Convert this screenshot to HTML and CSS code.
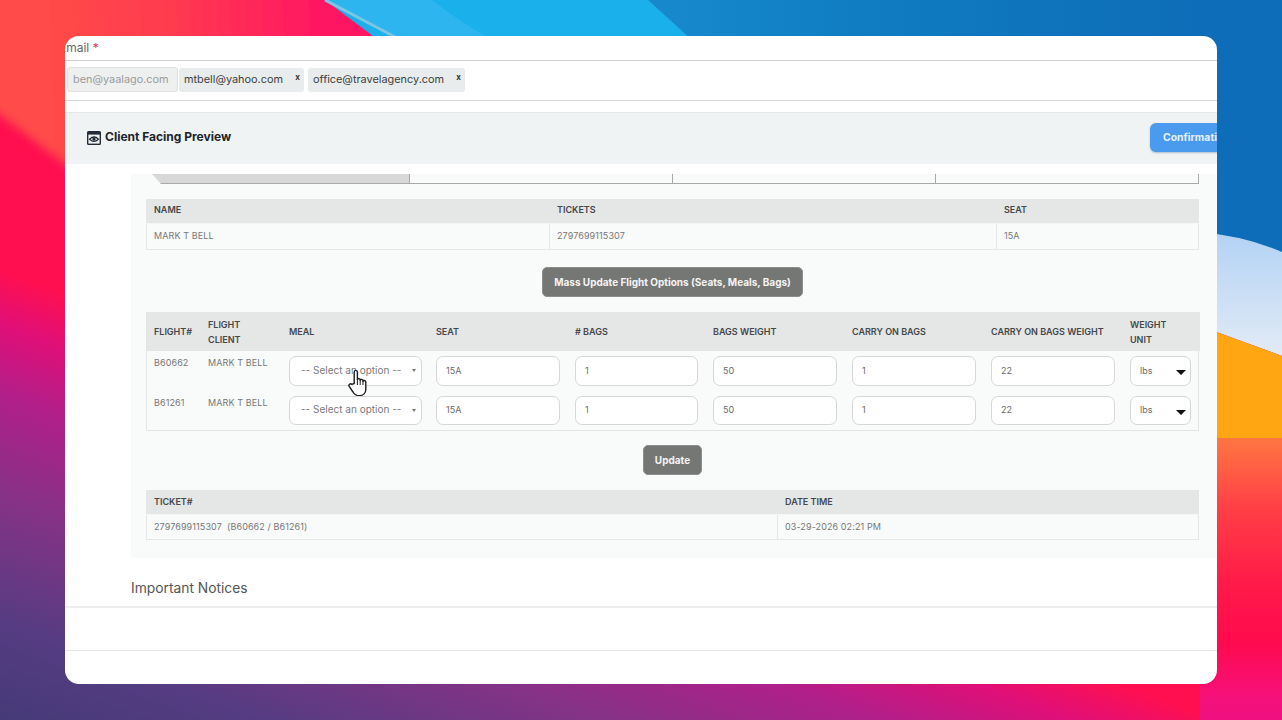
FILE: index.html
```html
<!DOCTYPE html>
<html lang="en">
<head>
<meta charset="utf-8">
<title>Client Facing Preview</title>
<link rel="stylesheet" href="styles.css">
</head>
<body>
<svg class="wallpaper" viewBox="0 0 1282 720" width="1282" height="720" aria-hidden="true">
  <defs>
    <linearGradient id="baseGrad" gradientUnits="userSpaceOnUse" x1="0" y1="720" x2="146" y2="324">
      <stop offset="0" stop-color="#453a78"/>
      <stop offset=".22" stop-color="#563c82"/>
      <stop offset=".5" stop-color="#863286"/>
      <stop offset=".72" stop-color="#b01f8a"/>
      <stop offset=".88" stop-color="#e00f78"/>
      <stop offset="1" stop-color="#ff0f50"/>
    </linearGradient>
    <linearGradient id="redGrad" gradientUnits="userSpaceOnUse" x1="40" y1="40" x2="340" y2="30">
      <stop offset="0" stop-color="#ff4c48"/>
      <stop offset=".45" stop-color="#ff3a50"/>
      <stop offset="1" stop-color="#ff1264"/>
    </linearGradient>
    <linearGradient id="blueGrad" gradientUnits="userSpaceOnUse" x1="680" y1="0" x2="1200" y2="0">
      <stop offset="0" stop-color="#1688cb"/>
      <stop offset=".4" stop-color="#0f7bc1"/>
      <stop offset="1" stop-color="#0e6db8"/>
    </linearGradient>
    <linearGradient id="skyGrad" x1="0" y1="0" x2="0" y2="1">
      <stop offset="0" stop-color="#b2d2f5"/>
      <stop offset="1" stop-color="#e2ebf5"/>
    </linearGradient>
    <linearGradient id="sunsetGrad" gradientUnits="userSpaceOnUse" x1="0" y1="438" x2="0" y2="720">
      <stop offset="0" stop-color="#ff7642"/>
      <stop offset=".25" stop-color="#ff3f46"/>
      <stop offset=".5" stop-color="#ff1c48"/>
      <stop offset=".72" stop-color="#ff0a4e"/>
      <stop offset=".92" stop-color="#f5107a"/>
      <stop offset="1" stop-color="#f01080"/>
    </linearGradient>
    <filter id="soft" x="-10%" y="-10%" width="120%" height="120%">
      <feGaussianBlur stdDeviation="5"/>
    </filter>
  </defs>
  <rect width="1282" height="720" fill="url(#baseGrad)"/>
  <path d="M-30 -30H400V60L70 168 -30 92Z" fill="url(#redGrad)" filter="url(#soft)"/>
  <path d="M325 0H760V60H405Z" fill="#1ab0ec"/>
  <path d="M325 0H432Q460 22 492 40H403Z" fill="#2cb5ee"/>
  <path d="M325 0L397 38" stroke="#7cc6e4" stroke-width="3" fill="none"/>
  <path d="M648 0H1282V260H692V40Q670 20 648 0Z" fill="url(#blueGrad)"/>
  <path d="M1200 232Q1245 236 1282 252V356L1200 326Z" fill="url(#skyGrad)"/>
  <path d="M1200 326L1282 356V440L1200 438Z" fill="#ffa612"/>
  <rect x="1200" y="438" width="82" height="282" fill="url(#sunsetGrad)"/>
</svg>

<main class="card">
  <div class="email-label"><span class="email-text">Email</span> <span class="req">*</span></div>
  <div class="tag-row">
    <span class="tag tag-locked">ben@yaalago.com</span>
    <span class="tag tag-second">mtbell@yahoo.com<b class="tag-x">x</b></span>
    <span class="tag tag-third">office@travelagency.com<b class="tag-x">x</b></span>
  </div>

  <header class="preview-head">
    <h1 class="preview-title">
      <svg class="eye-icon" viewBox="0 0 14 14" width="14" height="14" aria-hidden="true">
        <path d="M1.5 0H12.5A1.5 1.5 0 0 1 14 1.5V12.5A1.5 1.5 0 0 1 12.5 14H1.5A1.5 1.5 0 0 1 0 12.5V1.5A1.5 1.5 0 0 1 1.5 0Z" fill="#252b36"/>
        <rect x="1.4" y="3.6" width="11.2" height="9" fill="#eef2f3"/>
        <path d="M2.6 8.2Q7 3.8 11.4 8.2 7 12.4 2.6 8.2Z" fill="none" stroke="#252b36" stroke-width="1.2"/>
        <circle cx="7" cy="8.1" r="1.6" fill="#252b36"/>
      </svg>
      Client Facing Preview
    </h1>
    <button class="btn-confirm" type="button">Confirmation</button>
  </header>

  <section class="panel">
    <div class="tabs">
      <div class="tab tab-active"></div>
      <div class="tab"></div>
      <div class="tab"></div>
      <div class="tab"></div>
    </div>

    <div class="table-simple cols-name">
      <div class="th">NAME</div><div class="th">TICKETS</div><div class="th">SEAT</div>
      <div class="td">MARK T BELL</div><div class="td">2797699115307</div><div class="td td-last">15A</div>
    </div>

    <div class="btn-line btn-line-mass"><button class="btn-gray btn-mass" type="button">Mass Update Flight Options (Seats, Meals, Bags)</button></div>

    <div class="table-flights">
      <div class="fh">FLIGHT#</div><div class="fh fh-wrap">FLIGHT CLIENT</div><div class="fh">MEAL</div><div class="fh">SEAT</div><div class="fh"># BAGS</div><div class="fh">BAGS WEIGHT</div><div class="fh">CARRY ON BAGS</div><div class="fh">CARRY ON BAGS WEIGHT</div><div class="fh fh-wrap">WEIGHT UNIT</div>

      <div class="fc fc-text">B60662</div><div class="fc fc-text">MARK T BELL</div>
      <div class="fc fc-pointer">
        <div class="field field-select">-- Select an option --</div>
        <svg class="hand" viewBox="0 0 20 28" width="20" height="28" aria-hidden="true">
          <path d="M6.2 14.5V3.2C6.2 .8 9.4 .8 9.4 3.2V10.5C9.4 9.3 12.2 9.3 12.2 10.7V11.2C12.2 10 15 10 15 11.5V12.2C15 11 17.8 11.2 17.8 12.8V20C17.8 24 15.4 26.8 11.4 26.8 8 26.8 6.4 25.4 5 23L1.2 17.4C.2 15.6 2.4 14 3.8 15.4Z" fill="#fff" stroke="#1c1c1c" stroke-width="1.4" stroke-linejoin="round"/>
          <path d="M9.4 10.5V16M12.2 11V16M15 12V16" stroke="#1c1c1c" stroke-width="1" fill="none"/>
        </svg>
      </div>
      <div class="fc"><div class="field">15A</div></div><div class="fc"><div class="field">1</div></div><div class="fc"><div class="field">50</div></div><div class="fc"><div class="field">1</div></div><div class="fc"><div class="field">22</div></div><div class="fc fc-unit"><div class="field field-unit">lbs</div></div>

      <div class="fc fc-text">B61261</div><div class="fc fc-text">MARK T BELL</div>
      <div class="fc"><div class="field field-short field-select">-- Select an option --</div></div>
      <div class="fc"><div class="field field-short">15A</div></div><div class="fc"><div class="field field-short">1</div></div><div class="fc"><div class="field field-short">50</div></div><div class="fc"><div class="field field-short">1</div></div><div class="fc"><div class="field field-short">22</div></div><div class="fc fc-unit"><div class="field field-short field-unit">lbs</div></div>
    </div>

    <div class="btn-line btn-line-update"><button class="btn-gray btn-update" type="button">Update</button></div>

    <div class="table-simple cols-ticket">
      <div class="th">TICKET#</div><div class="th">DATE TIME</div>
      <div class="td">2797699115307 &nbsp;(B60662 / B61261)</div><div class="td td-last">03-29-2026 02:21 PM</div>
    </div>
  </section>

  <h2 class="notices">Important Notices</h2>
  <div class="empty-row"></div>
</main>
</body>
</html>
```

FILE: styles.css
```css
* { box-sizing: border-box; }

html, body { margin: 0; height: 720px; overflow: hidden; }

body {
  position: relative;
  padding: 36px 0 0 65px;
  font-family: Inter, "Liberation Sans", sans-serif;
  background: #453a78;
}

.wallpaper { position: absolute; left: 0; top: 0; display: block; }

.card {
  position: relative;
  display: flex;
  flex-direction: column;
  width: 1152px;
  height: 648px;
  overflow: hidden;
  background: #fff;
  border-radius: 14px;
}

.email-label {
  flex: none;
  height: 25px;
  padding-top: 5px;
  border-bottom: 1px solid #cfcfcf;
  font-size: 12px;
  line-height: 14px;
  color: #666;
  white-space: nowrap;
}
.email-text { margin-left: -6px; }
.req { color: #e03a3a; }

.tag-row {
  flex: none;
  display: flex;
  align-items: center;
  height: 40px;
  padding: 0 0 2px 2px;
  border-bottom: 1px solid #d4d4d4;
}

.tag {
  position: relative;
  display: flex;
  align-items: center;
  height: 24px;
  padding-bottom: 2px;
  font-size: 10.9px;
  color: #3b3f42;
  background: #e9eced;
  border-radius: 3px;
  white-space: nowrap;
}
.tag-locked {
  width: 111px;
  height: 25px;
  padding-left: 5px;
  color: #9a9c9c;
  background: #eeefef;
  border: 1px solid #e0e0e0;
}
.tag-second { width: 125px; margin-left: 1px; padding-left: 5px; }
.tag-third { width: 157px; margin-left: 4px; padding-left: 5px; }
.tag-x {
  position: absolute;
  top: 4px;
  right: 4px;
  font-size: 8px;
  line-height: 10px;
  font-weight: 700;
  color: #333;
}

.preview-head {
  flex: none;
  align-self: flex-start;
  display: flex;
  align-items: center;
  justify-content: space-between;
  width: 1195px;
  height: 52px;
  margin-top: 11px;
  padding: 0 0 3px 22px;
  background: #eff3f4;
  border-top: 1px solid #e4e8e9;
}
.preview-title {
  display: flex;
  align-items: center;
  gap: 4px;
  margin: 0 0 2px;
  font-size: 12px;
  font-weight: 700;
  color: #20242c;
}
.eye-icon { margin-top: 4px; }
.btn-confirm {
  flex: none;
  width: 110px;
  height: 29px;
  padding: 0 0 0 13px;
  text-align: left;
  font: 700 10.4px Inter, "Liberation Sans", sans-serif;
  color: #e4f0fd;
  background: #4a9aee;
  border: 0;
  border-radius: 6px;
  box-shadow: 0 1px 2px rgba(60, 90, 130, .35);
}

.panel {
  flex: none;
  width: 1086px;
  height: 384px;
  margin: 10px 0 0 66px;
  padding: 0 18px 0 15px;
  background: #f9fbfb;
}

.tabs {
  display: grid;
  grid-template-columns: 264px 263px 263px 263px;
  height: 10px;
  margin-bottom: 15px;
}
.tab {
  border-right: 1px solid #a9a9a9;
  border-bottom: 1px solid #a9a9a9;
}
.tab-active {
  background: #d8d8d8;
  clip-path: polygon(6px 0, 100% 0, 100% 100%, 15px 100%);
}

.table-simple {
  display: grid;
  font-size: 9px;
  line-height: 12px;
}
.cols-name { grid-template-columns: 403px 447px 203px; }
.cols-ticket { grid-template-columns: 631px 422px; }

.th {
  height: 25px;
  padding: 6px 8px 0;
  font-weight: 600;
  color: #44484b;
  background: #e5e6e6;
  border-bottom: 1px solid #f4f5f5;
}
.cols-name .th { padding-top: 5px; }
.td {
  height: 25px;
  padding: 6px 7px 0;
  letter-spacing: .1px;
  color: #777;
  border-left: 1px solid #e6e8e8;
  border-bottom: 1px solid #e6e8e8;
}
.cols-name .td { height: 26px; }
.td-last { border-right: 1px solid #e6e8e8; }

.btn-line { display: flex; justify-content: center; }
.btn-line-mass { margin: 17px 0 15px; }
.btn-line-update { margin: 14px 0 15px; }

.btn-gray {
  height: 30px;
  padding: 0;
  font: 700 10px Inter, "Liberation Sans", sans-serif;
  color: #f4f4f4;
  background: #757775;
  border: 1px solid #8c8e8c;
  border-radius: 5px;
}
.btn-mass { width: 261px; }
.btn-update { width: 59px; }

.table-flights {
  display: grid;
  grid-template-columns: 54px 81px 147px 139px 138px 139px 139px 139px 77px;
  grid-template-rows: 39px 40px 40px;
  height: 119px;
  font-size: 9px;
  line-height: 15px;
  border-right: 1px solid #e3e5e5;
  border-left: 1px solid #e3e5e5;
  border-bottom: 1px solid #e3e5e5;
}
.fh {
  display: flex;
  align-items: center;
  padding: 0 7px;
  font-weight: 600;
  color: #44484b;
  background: #e5e6e6;
}
.fh-wrap { padding-right: 24px; }
.fc { position: relative; padding: 5px 8px 0 7px; }
.fc-unit { padding-right: 9px; }
.fc-text { padding-top: 4px; letter-spacing: .1px; color: #777; }

.field {
  position: relative;
  display: flex;
  align-items: center;
  height: 30px;
  padding: 0 0 2px 9px;
  color: #6a6a6a;
  background: #fff;
  border: 1px solid #d6d8d8;
  border-radius: 7px;
}
.field-short { height: 29px; }
.field-select {
  width: 133px;
  padding-left: 11px;
  font-size: 10px;
  color: #7a7a7a;
}
.field-select::after {
  content: "";
  position: absolute;
  right: 5px;
  top: 12px;
  border: 2px solid transparent;
  border-top: 3px solid #777;
}
.field-unit::after {
  content: "";
  position: absolute;
  right: 4px;
  top: 13px;
  border: 5px solid transparent;
  border-top: 5px solid #111;
  border-bottom: 0;
}

.hand { position: absolute; left: 66px; top: 18px; }

.notices {
  flex: none;
  height: 50px;
  margin: 0;
  padding: 21px 0 0 66px;
  font-size: 13.8px;
  line-height: 18px;
  font-weight: 400;
  color: #555;
  border-bottom: 2px solid #ededed;
}
.empty-row {
  flex: none;
  height: 43px;
  border-bottom: 1px solid #e5e5e5;
}
```
